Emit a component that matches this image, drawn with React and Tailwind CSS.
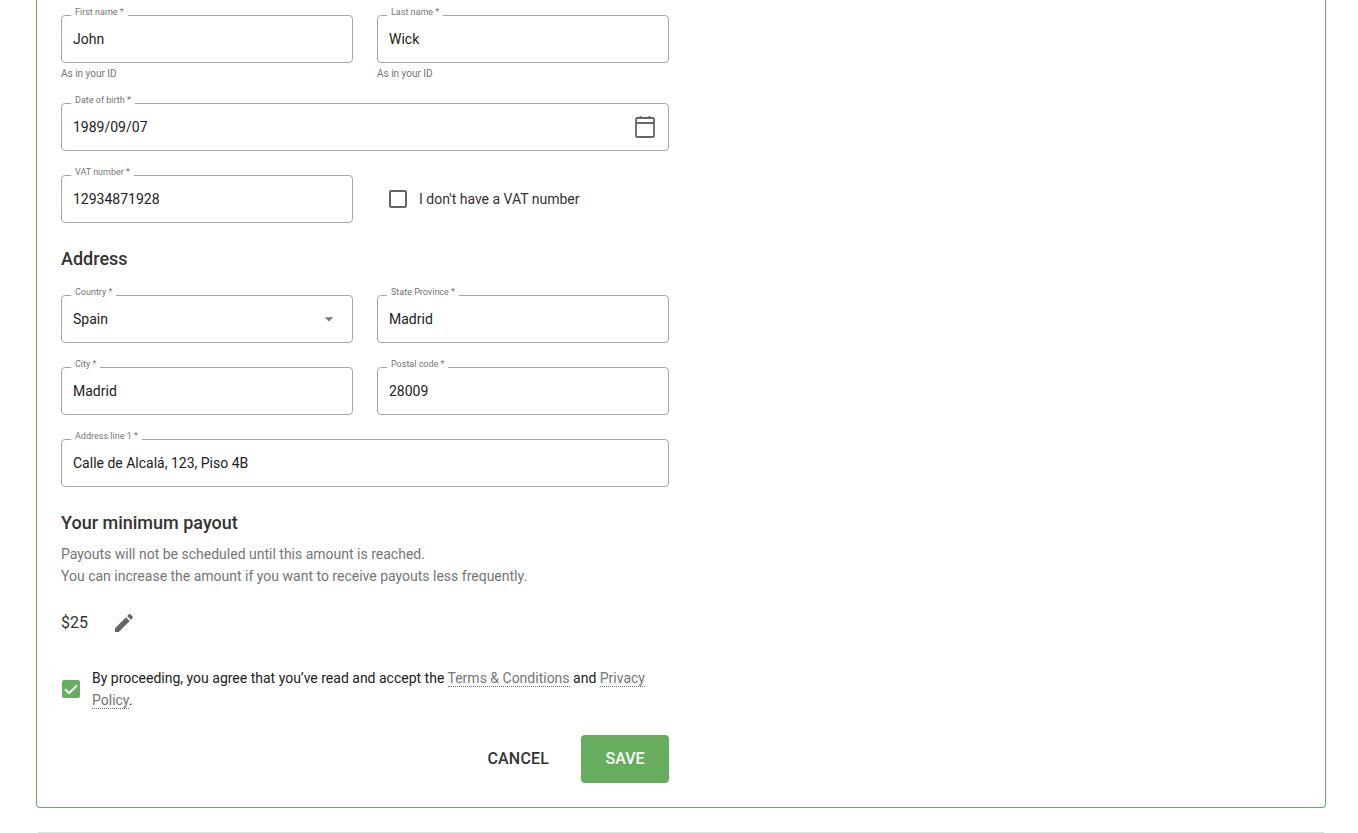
import { useState } from 'react';

function Field({ label, value, className = '', children }) {
  return (
    <div className={`relative h-12 rounded border border-[#a6a6a6] flex items-center justify-between pl-[11px] ${className}`}>
      <span className="absolute left-[9px] -top-[10px] bg-white px-1 text-[9px] leading-[12px] text-[#757575]">{label}</span>
      <span className="pt-px text-[14px] text-[#212121]">{value}</span>
      {children}
    </div>
  );
}

function Link({ children }) {
  return <a className="text-[#757575] border-b border-dotted border-[#757575]">{children}</a>;
}

export default function App() {
  const [noVat, setNoVat] = useState(false);
  const [agree, setAgree] = useState(true);

  return (
    <div className="h-[833px] overflow-hidden bg-white font-['Roboto',sans-serif] text-[#212121]">
      <div className="ml-9 mr-8 h-[808px] rounded-b border-x border-b border-[#66ad5e] pt-[15px] pl-6">
        <div className="w-[608px]">
          <div className="grid grid-cols-2 gap-6">
            <div>
              <Field label="First name *" value="John" />
              <p className="mt-[5px] text-[10px] leading-[12px] text-[#757575]">As in your ID</p>
            </div>
            <div>
              <Field label="Last name *" value="Wick" />
              <p className="mt-[5px] text-[10px] leading-[12px] text-[#757575]">As in your ID</p>
            </div>
          </div>

          <Field label="Date of birth *" value="1989/09/07" className="mt-[23px] pr-[11px]">
            <svg width="24" height="24" viewBox="0 0 24 24" fill="none" stroke="#666666" strokeWidth="1.8">
              <rect x="3" y="3" width="18" height="19" rx="1" />
              <path d="M3 8h18M7.5 1v3M16.5 1v3" />
            </svg>
          </Field>

          <div className="mt-6 grid grid-cols-2 gap-6">
            <Field label="VAT number *" value="12934871928" />
            <label className="flex items-center gap-3 pl-3 text-[14px] text-[#333333]">
              <input type="checkbox" checked={noVat} onChange={(e) => setNoVat(e.target.checked)} className="sr-only" />
              <span className="h-[18px] w-[18px] rounded-[2px] border-2 border-[#666666]" />
              <span className="pt-px">I don't have a VAT number</span>
            </label>
          </div>

          <h2 className="mt-6 text-[18px] font-medium leading-6 text-[#333333]">Address</h2>

          <div className="mt-6 grid grid-cols-2 gap-x-6 gap-y-6">
            <Field label="Country *" value="Spain" className="pr-[13px]">
              <svg width="20" height="20" viewBox="0 0 24 24" fill="#757575">
                <path d="M7 10l5 5 5-5z" />
              </svg>
            </Field>
            <Field label="State Province *" value="Madrid" />
            <Field label="City *" value="Madrid" />
            <Field label="Postal code *" value="28009" />
            <Field label="Address line 1 *" value="Calle de Alcalá, 123, Piso 4B" className="col-span-2" />
          </div>

          <h2 className="mt-6 text-[18px] font-medium leading-6 text-[#333333]">Your minimum payout</h2>
          <p className="mt-[8px] text-[14px] leading-[22px] text-[#757575]">
            Payouts will not be scheduled until this amount is reached.
            <br />
            You can increase the amount if you want to receive payouts less frequently.
          </p>

          <div className="mt-6 flex h-6 items-center gap-6">
            <span className="text-[16px] text-[#333333]">$25</span>
            <svg width="24" height="24" viewBox="0 0 24 24" fill="#666666">
              <path d="M3 17.25V21h3.75L17.81 9.94l-3.75-3.75L3 17.25zM20.71 7.04c.39-.39.39-1.02 0-1.41l-2.34-2.34c-.39-.39-1.02-.39-1.41 0l-1.83 1.83 3.75 3.75 1.83-1.83z" />
            </svg>
          </div>

          <label className="mt-8 flex items-center gap-3 pl-px text-[14px] leading-[22px] text-[#212121]">
            <input type="checkbox" checked={agree} onChange={(e) => setAgree(e.target.checked)} className="sr-only" />
            <span className="flex h-[18px] w-[18px] shrink-0 items-center justify-center rounded-[2px] bg-[#66ad5e]">
              <svg width="16" height="16" viewBox="0 0 16 16" fill="none" stroke="#ffffff" strokeWidth="2">
                <path d="M2 8.2l4 4L14 4.5" />
              </svg>
            </span>
            <span>
              By proceeding, you agree that you’ve read and accept the <Link>Terms &amp; Conditions</Link> and <Link>Privacy Policy</Link>.
            </span>
          </label>

          <div className="mt-6 flex items-center justify-end gap-4">
            <button className="h-12 px-4 text-[16px] font-medium tracking-[0.01em] text-[#333333]">CANCEL</button>
            <button className="h-12 w-[88px] rounded bg-[#66ad5e] text-[16px] font-medium text-white">SAVE</button>
          </div>
        </div>
      </div>
      <div className="ml-[38px] mr-[34px] mt-6 h-px bg-[#e0e0e0]" />
    </div>
  );
}
